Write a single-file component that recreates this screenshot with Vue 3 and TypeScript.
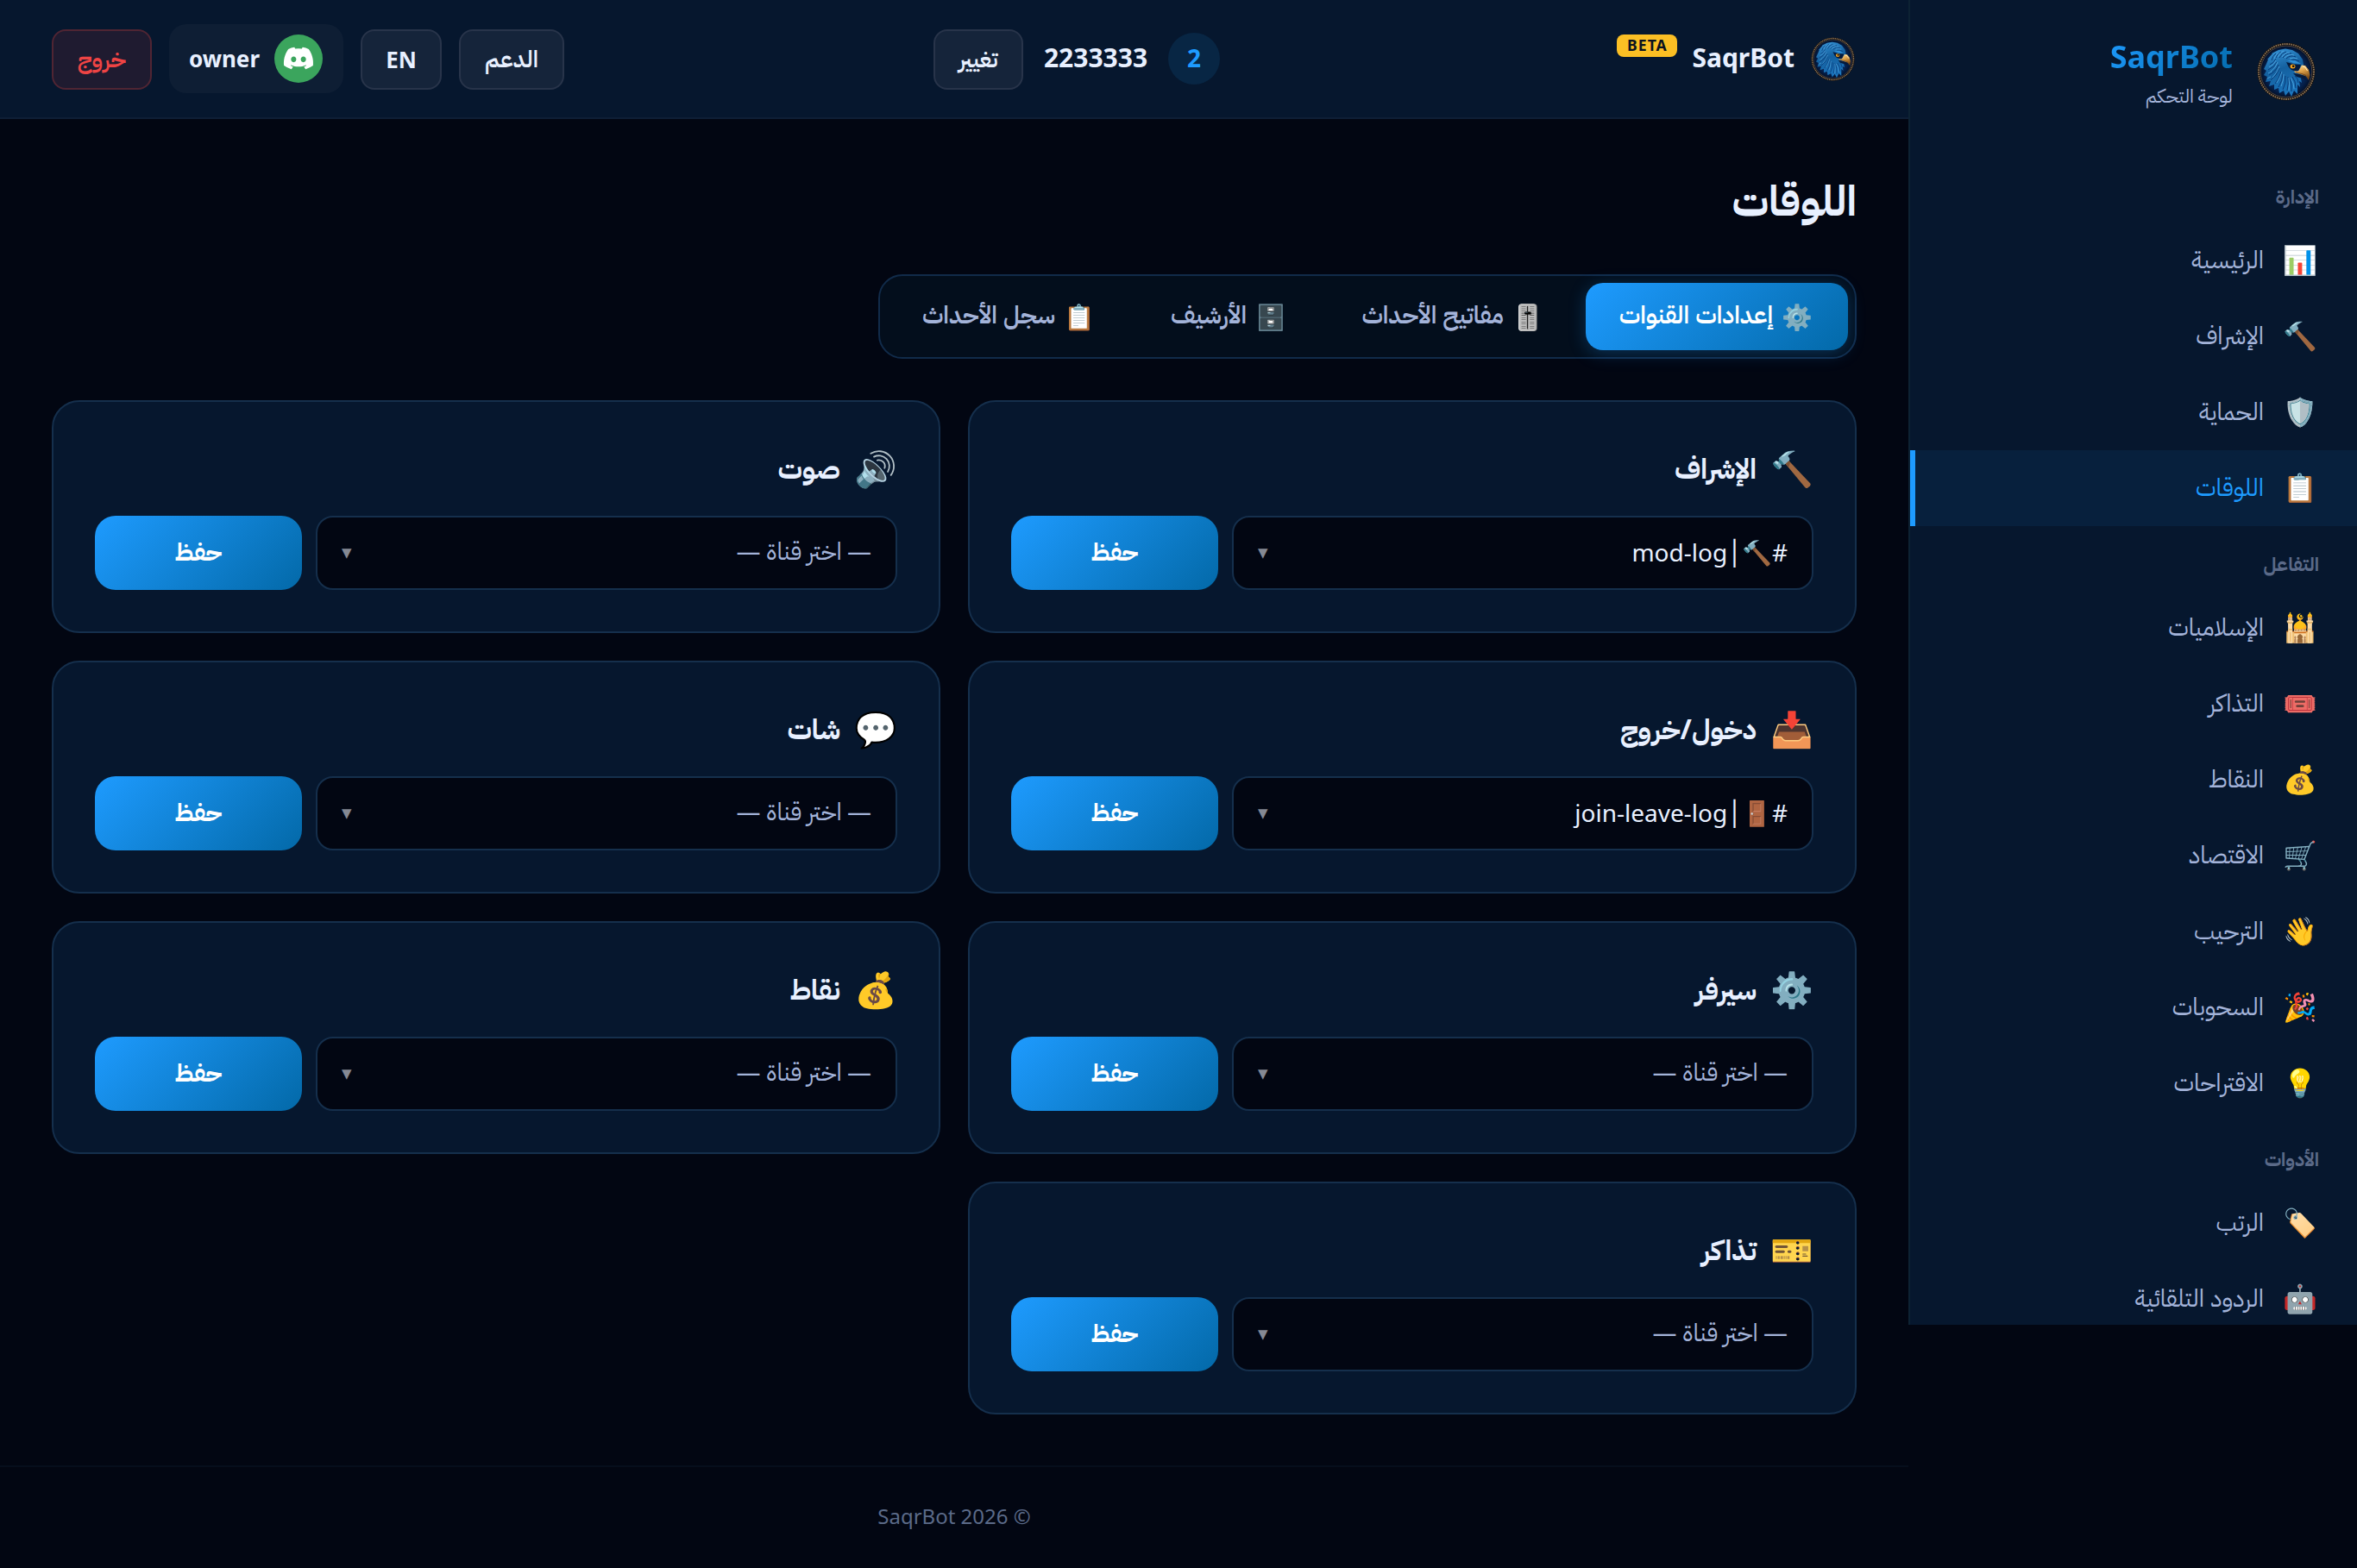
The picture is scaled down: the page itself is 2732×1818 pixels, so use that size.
<script setup lang="ts">
interface NavItem { icon: string; label: string; active?: boolean }
interface NavGroup { title: string; items: NavItem[] }
interface LogCard { icon: string; title: string; channel?: string }

const groups: NavGroup[] = [
  {
    title: 'الإدارة',
    items: [
      { icon: '📊', label: 'الرئيسية' },
      { icon: '🔨', label: 'الإشراف' },
      { icon: '🛡️', label: 'الحماية' },
      { icon: '📋', label: 'اللوقات', active: true },
    ],
  },
  {
    title: 'التفاعل',
    items: [
      { icon: '🕌', label: 'الإسلاميات' },
      { icon: '🎟️', label: 'التذاكر' },
      { icon: '💰', label: 'النقاط' },
      { icon: '🛒', label: 'الاقتصاد' },
      { icon: '👋', label: 'الترحيب' },
      { icon: '🎉', label: 'السحوبات' },
      { icon: '💡', label: 'الاقتراحات' },
    ],
  },
  {
    title: 'الأدوات',
    items: [
      { icon: '🏷️', label: 'الرتب' },
      { icon: '🤖', label: 'الردود التلقائية' },
    ],
  },
]

const tabs: (NavItem & { width: number })[] = [
  { icon: '⚙️', label: 'إعدادات القنوات', active: true, width: 304 },
  { icon: '🎚️', label: 'مفاتيح الأحداث', width: 290 },
  { icon: '🗄️', label: 'الأرشيف', width: 214 },
  { icon: '📋', label: 'سجل الأحداث', width: 282 },
]

const cards: LogCard[] = [
  { icon: '🔨', title: 'الإشراف', channel: '#🔨│mod-log' },
  { icon: '🔊', title: 'صوت' },
  { icon: '📥', title: 'دخول/خروج', channel: '#🚪│join-leave-log' },
  { icon: '💬', title: 'شات' },
  { icon: '⚙️', title: 'سيرفر' },
  { icon: '💰', title: 'نقاط' },
  { icon: '🎫', title: 'تذاكر' },
]
</script>

<template>
  <svg class="defs" width="0" height="0">
    <defs>
      <radialGradient id="disc" cx=".5" cy=".5" r=".5">
        <stop offset="0" stop-color="#0a3f86" /><stop offset=".75" stop-color="#05204c" /><stop offset="1" stop-color="#020b1e" />
      </radialGradient>
      <linearGradient id="plume" x1=".2" y1="0" x2=".5" y2="1">
        <stop offset="0" stop-color="#3795d8" /><stop offset=".45" stop-color="#14609f" /><stop offset="1" stop-color="#1c76bd" />
      </linearGradient>
      <linearGradient id="beak" x1="0" y1="0" x2=".4" y2="1">
        <stop offset="0" stop-color="#ffe2a0" /><stop offset=".5" stop-color="#dfa24a" /><stop offset="1" stop-color="#7a4a16" />
      </linearGradient>
      <symbol id="falcon" viewBox="0 0 68 68">
        <circle cx="34" cy="34" r="32" fill="url(#disc)" />
        <circle cx="34" cy="34" r="32" fill="none" stroke="#15110f" stroke-width="3" />
        <circle cx="34" cy="34" r="32" fill="none" stroke="#94795a" stroke-width="1.800" stroke-dasharray="1.6 1" />
        <circle cx="34" cy="34" r="29.900" fill="none" stroke="#6e5a48" stroke-width=".7" />
        <path fill="url(#plume)" d="M11 25 L13 20 L12 20 L18 13 L17 13 L25 9 L33 7.500 L41 9 L48 13 L53 20 L54 26 L52 32 L54 38 L51 42 L52 47 L49 45 L50 52 L47 49 L47 60 L43 56 L40 63 L37 57 L33 62 L31 56 L26 59 L25 53 L20 55 L20 49 L14 51 L16 45 L10 46 L12 40 L8 38 L11 33 L8 31 Z" />
        <path fill="none" stroke="#083a78" stroke-width="1" d="M15 26q5-2 7-7M13 32q7-3 10-9M14 38q8-4 11-12M16 44q7-5 10-14M21 48q5-6 7-14M25 52q5-8 5-15M30 55q4-8 3-16M35 56q2-8 1-16M40 57q1-8-2-16M45 53q0-8-4-13M48 47q0-5-4-8M22 13q-4 3-5 8M28 11q-4 2-6 7M34 11q-5 1-8 7M40 13q-6-1-10 5M45 17q-6-3-11 2M49 22q-5-3-9-1" />
        <path fill="none" stroke="#5db4ec" stroke-width=".7" d="M14 29q6-3 8-8M16 34q6-4 8-11M18 41q5-5 8-13M23 47q4-6 6-13M28 51q3-7 3-14M37 56q1-8 0-15M43 54q0-7-4-13M25 12q-4 3-5 7M31 10q-5 2-7 7M38 12q-6 0-9 5M43 15q-6-2-11 3M47 19q-5-2-9 0M13 36l4-2M12 42l4-2" />
        <path fill="#051a3c" d="M34 23 L43 25.500 L51 26 L49 32 L46 34 L40 32 L37 29 Z M42 36 L49 37 L56 39 L57 44 L53 42 L46 40 Z" />
        <path fill="#2f8fd6" d="M35 21 L44 21 L51 25 L43 24.500 Z" />
        <ellipse cx="41.500" cy="28" rx="3" ry="2.500" fill="#f0a322" /><circle cx="42.200" cy="27.700" r="1.300" fill="#100a05" />
        <path fill="url(#beak)" d="M50 30 L52 26.500 L56 27 L60 32 L61.500 38 L60 44 L57 39.500 L52 37.500 L44 35 L43 33.500 L48 33.500 Z" />
        <path fill="none" stroke="#5f3a14" stroke-width=".7" d="M45 35l7 1.500 5 2" />
        <path stroke="#fff0c4" stroke-width="1" d="M53 28l3 1 2.500 4" fill="none" />
      </symbol>
    </defs>
  </svg>
  <div class="app" dir="rtl">
    <aside class="sidebar">
      <div class="brand">
        <svg class="brand-logo"><use href="#falcon" /></svg>
        <div class="brand-text">
          <span class="brand-name">SaqrBot</span>
          <span class="brand-sub">لوحة التحكم</span>
        </div>
      </div>
      <nav>
        <template v-for="g in groups" :key="g.title">
          <div class="group-title">{{ g.title }}</div>
          <a v-for="it in g.items" :key="it.label" class="nav-item" :class="{ active: it.active }">
            <span class="nav-icon">{{ it.icon }}</span><span>{{ it.label }}</span>
          </a>
        </template>
      </nav>
    </aside>

    <div class="page">
      <header class="topbar">
        <div class="top-brand">
          <svg class="top-logo"><use href="#falcon" /></svg>
          <span class="top-name">SaqrBot</span>
          <span class="beta">BETA</span>
        </div>
        <div class="server">
          <span class="server-badge">2</span>
          <span class="server-name">2233333</span>
          <button class="btn change">تغيير</button>
        </div>
        <div class="actions">
          <button class="btn support">الدعم</button>
          <button class="btn lang">EN</button>
          <div class="user">
            <svg class="avatar" viewBox="0 0 56 56">
              <circle cx="28" cy="28" r="28" fill="#3ba55d" />
              <g transform="translate(11 14.800) scale(1.417)">
                <path fill="#fff" d="M20.317 1.492a19.825 19.825 0 0 0-4.885-1.490.075.075 0 0 0-.079.037c-.21.370-.444.850-.608 1.230a18.566 18.566 0 0 0-5.487 0 12.360 12.360 0 0 0-.617-1.230A.077.077 0 0 0 8.562 0c-1.714.290-3.354.800-4.885 1.491a.070.070 0 0 0-.032.027C.533 6.093-.320 10.555.099 14.961a.080.080 0 0 0 .031.055 20.030 20.030 0 0 0 5.993 2.980.078.078 0 0 0 .084-.026 13.830 13.830 0 0 0 1.226-1.963.074.074 0 0 0-.041-.104 13.201 13.201 0 0 1-1.872-.878.075.075 0 0 1-.008-.125c.126-.093.252-.190.372-.287a.075.075 0 0 1 .078-.010c3.927 1.764 8.180 1.764 12.061 0a.075.075 0 0 1 .079.009c.120.098.245.195.372.288a.075.075 0 0 1-.006.125c-.598.344-1.220.635-1.873.877a.075.075 0 0 0-.041.105c.360.687 1.225 1.962 1.225 1.962a.077.077 0 0 0 .084.028 19.963 19.963 0 0 0 6.002-2.981.076.076 0 0 0 .032-.054c.500-5.094-.838-9.520-3.549-13.442a.060.060 0 0 0-.031-.028zM8.020 12.278c-1.182 0-2.157-1.069-2.157-2.380 0-1.312.956-2.380 2.157-2.380 1.210 0 2.176 1.077 2.157 2.380 0 1.312-.956 2.380-2.157 2.380zm7.975 0c-1.183 0-2.157-1.069-2.157-2.380 0-1.312.955-2.380 2.157-2.380 1.210 0 2.176 1.077 2.157 2.380 0 1.312-.946 2.380-2.157 2.380z" />
              </g>
            </svg>
            <span class="user-name">owner</span>
          </div>
          <button class="btn logout">خروج</button>
        </div>
      </header>

      <main class="content">
        <h1>اللوقات</h1>
        <div class="tabs">
          <button v-for="t in tabs" :key="t.label" class="tab" :class="{ active: t.active }" :style="{ width: t.width + 'px' }">
            <span class="tab-icon">{{ t.icon }}</span><span>{{ t.label }}</span>
          </button>
        </div>
        <section class="grid">
          <article v-for="c in cards" :key="c.title" class="card">
            <h2><span class="card-icon">{{ c.icon }}</span><span>{{ c.title }}</span></h2>
            <div class="row">
              <div class="select">
                <span v-if="c.channel" class="value">{{ c.channel }}</span>
                <span v-else class="placeholder">— اختر قناة —</span>
                <span class="arrow">▼</span>
              </div>
              <button class="save">حفظ</button>
            </div>
          </article>
        </section>
      </main>

      <footer>© 2026 SaqrBot</footer>
    </div>
  </div>
</template>

<style>
body { background: #020612; }
</style>

<style scoped>
* { box-sizing: border-box; }
.defs { position: absolute; }
.app {
  width: 2732px;
  height: 1818px;
  display: flex;
  align-items: flex-start;
  overflow: hidden;
  background: #020612;
  color: #e8f0ff;
  font-family: "Noto Sans", "IBM Plex Sans Arabic", "Noto Color Emoji", "DejaVu Sans", sans-serif;
  font-size: 28px;
}
button { font-family: inherit; margin: 0; padding: 0; color: inherit; border: 0; background: none; }
.sidebar {
  flex: none;
  width: 520px;
  height: 1536px;
  overflow: hidden;
  background: #06172e;
  border-left: 2px solid #0d2233;
}
.brand { height: 184px; display: flex; align-items: flex-start; gap: 28px; padding: 39px 48px 0 0; }
.brand-logo { width: 68px; height: 68px; margin-top: 10px; }
.brand-text { display: flex; flex-direction: column; align-items: flex-start; }
.brand-name {
  font-size: 36px; font-weight: 700; line-height: 54px;
  background: linear-gradient(135deg, #1e9bff, #0369a8);
  -webkit-background-clip: text; background-clip: text; color: transparent;
}
.brand-sub { font-size: 22px; line-height: 34px; color: #a3b3d9; word-spacing: -1px; }
.group-title { height: 74px; padding: 26px 44px 0 0; font-size: 22px; line-height: 34px; font-weight: 700; color: #5b6a88; }
.nav-item { height: 88px; display: flex; align-items: center; gap: 20px; padding-right: 44px; padding-bottom: 1px; font-size: 28px; color: #a3b3d9; }
.nav-item.active { background: #07203d; color: #1e9bff; border-left: 6px solid #1e9bff; }
.nav-icon { width: 44px; text-align: center; font-size: 32px; margin-top: -3px; }

.page { flex: 1; min-width: 0; }
.topbar {
  height: 138px; display: flex; align-items: center; justify-content: space-between;
  padding: 0 60px; background: #06172e; border-bottom: 2px solid #0f1f36; position: relative;
}
.top-brand { display: flex; align-items: center; width: 310px; padding-right: 2px; }
.top-logo { width: 51px; height: 51px; margin-left: 19px; }
.top-name { font-size: 30px; font-weight: 700; padding-bottom: 4px; }
.beta { margin: -30px 17px 0 0; width: 70px; height: 26px; border-radius: 8px; background: #fbbf24; color: #0b1220; font-size: 17.600px; font-weight: 700; letter-spacing: 1px; line-height: 24px; text-align: center; }
.server { display: flex; align-items: center; }
.server-badge { width: 60px; height: 60px; border-radius: 50%; background: #082644; color: #1e9bff; font-weight: 700; font-size: 28px; line-height: 59px; text-align: center; }
.server-name { font-size: 30px; font-weight: 700; margin: 0 24px; padding-bottom: 4px; }
.btn { height: 70px; margin-top: 2px; border-radius: 16px; border: 2px solid #28344a; background: #15243a; color: #e8f0ff; font-size: 26.400px; font-weight: 600; }
.change { width: 104px; }
.support { width: 122px; }
.lang { width: 94px; font-weight: 700; font-size: 26px; }
.logout { width: 116px; background: #1f1b30; border-color: #502533; color: #ef4444; }
.actions { display: flex; align-items: center; gap: 20px; }
.user { width: 202px; height: 80px; border-radius: 20px; background: #0e1e34; display: flex; align-items: center; gap: 17px; padding-right: 24px; }
.avatar { width: 56px; height: 56px; flex: none; }
.user-name { font-size: 26px; font-weight: 700; }

.content { padding: 60px 60px 60px; height: 1561px; }
h1 { margin: 0; height: 120px; font-size: 48px; line-height: 67px; font-weight: 700; }
.tabs { width: 1134px; height: 98px; padding: 8px; display: flex; gap: 8px; border: 2px solid #112b4a; border-radius: 28px; background: #030e1c; }
.tab { flex: none; height: 78px; border-radius: 20px; display: flex; align-items: center; padding-right: 40px; padding-bottom: 2px; gap: 10px; color: #a3b3d9; font-size: 28px; font-weight: 600; white-space: nowrap; }
.tab.active { color: #fff; background: linear-gradient(135deg, #1e9bff, #0369a8); box-shadow: 0 4px 20px rgba(30, 155, 255, .25); }
.tab-icon { width: 37px; text-align: center; font-size: 28.800px; }
.grid { margin-top: 48px; display: grid; grid-template-columns: 1030px 1030px; gap: 32px; }
.card { height: 270px; padding: 48px; border: 2px solid #152f4c; border-radius: 32px; background: #06172e; }
h2 { margin: 0; height: 84px; display: flex; align-items: center; gap: 16px; font-size: 32px; font-weight: 700; line-height: 57px; padding-bottom: 27px; }
.card-icon { font-size: 40px; width: 50px; text-align: center; }
.row { display: flex; gap: 16px; }
.select { width: 674px; height: 86px; border: 2px solid #152f4c; border-radius: 20px; background: #020612; display: flex; align-items: center; justify-content: space-between; padding: 0 28px 2px; font-size: 28px; }
.placeholder { color: #a3b3d9; word-spacing: -1px; }
.arrow { color: #858994; font-size: 15px; }
.save { width: 240px; height: 86px; border-radius: 24px; background: linear-gradient(135deg, #1e9bff, #0369a8); color: #fff; font-size: 28px; font-weight: 700; }
footer { height: 119px; border-top: 2px solid #060e1c; text-align: center; font-size: 24px; line-height: 114px; color: #5b6a88; }
</style>
